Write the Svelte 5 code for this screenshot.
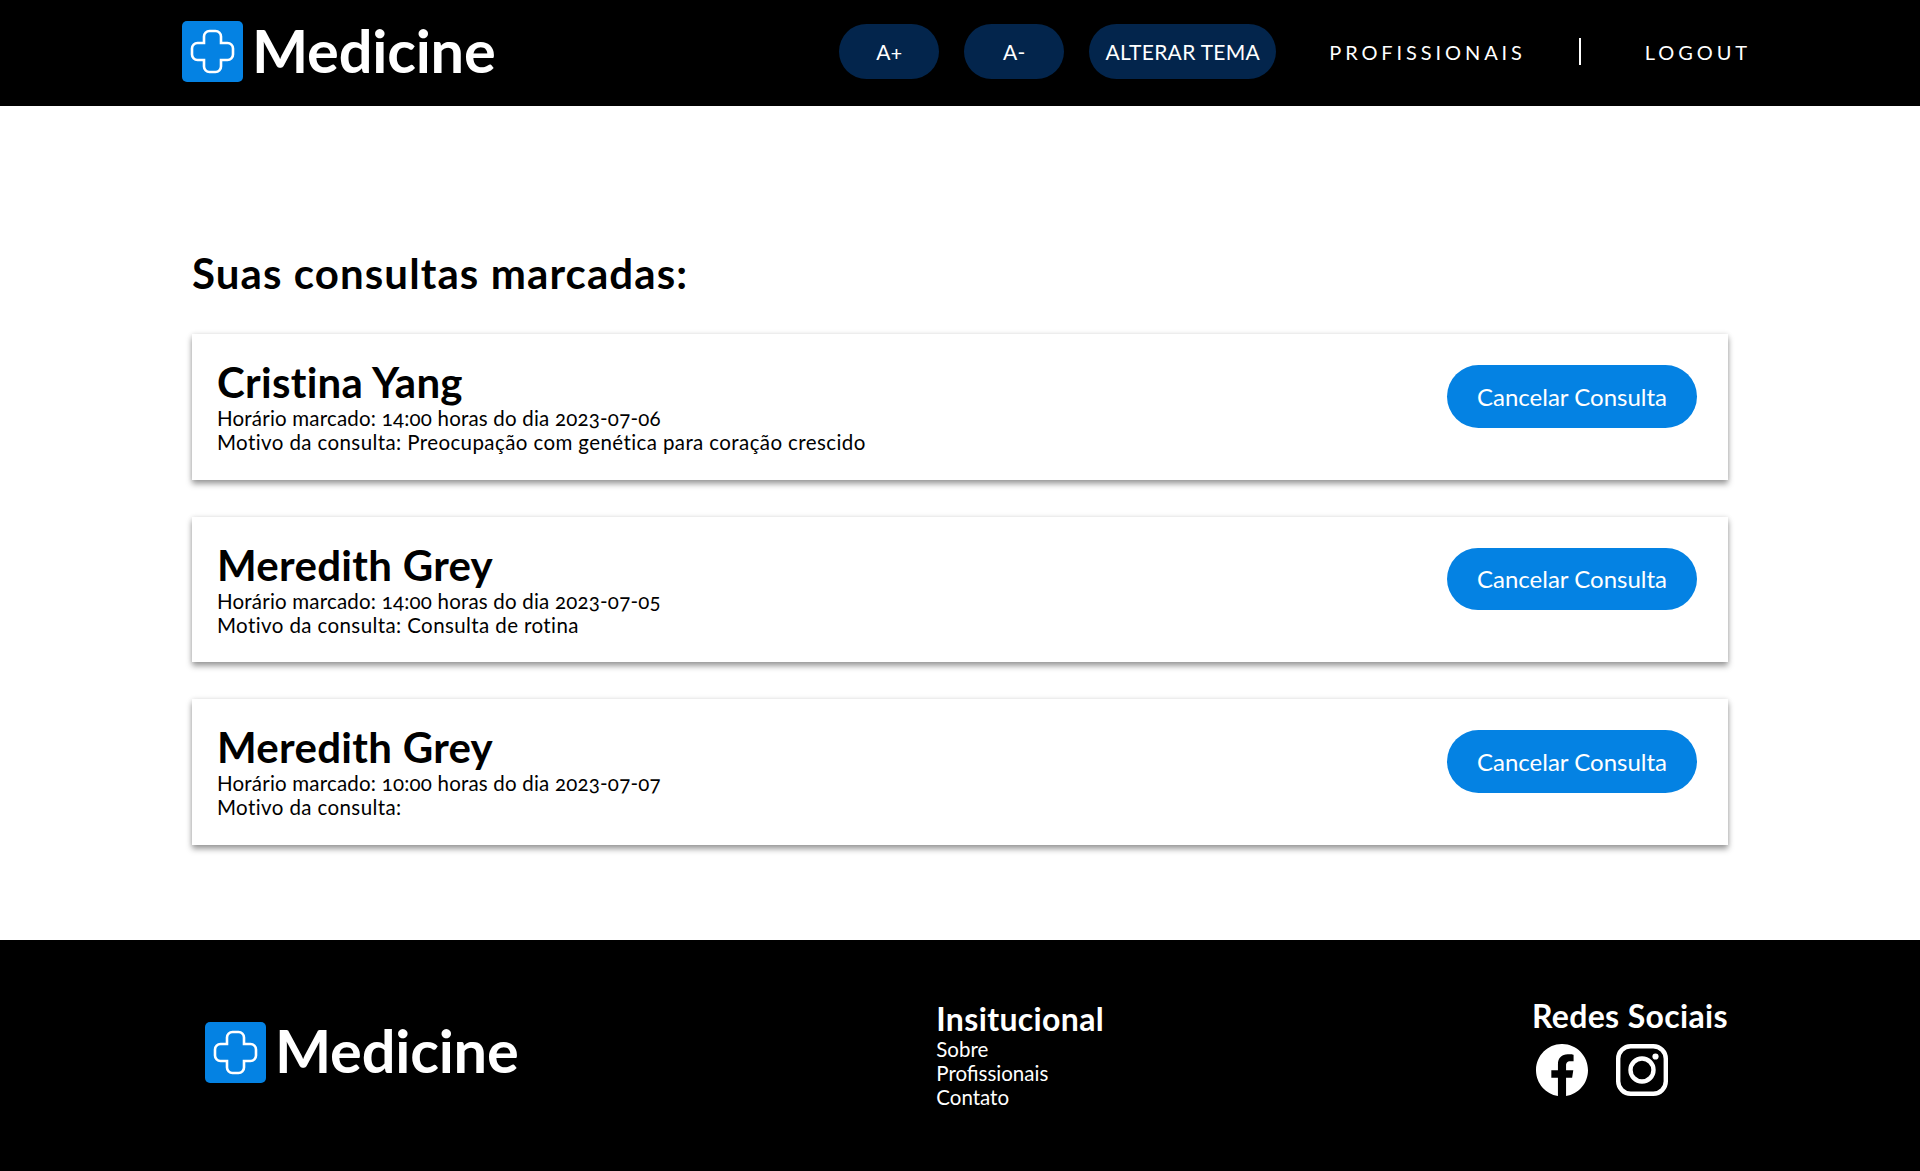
<script>
  const consultas = [
    { nome: 'Cristina Yang', horario: '14:00', dia: '2023-07-06', motivo: 'Preocupação com genética para coração crescido' },
    { nome: 'Meredith Grey', horario: '14:00', dia: '2023-07-05', motivo: 'Consulta de rotina' },
    { nome: 'Meredith Grey', horario: '10:00', dia: '2023-07-07', motivo: '' }
  ];
  const cross = 'M22 15.5a5.5 5.5 0 0 1 5.5-5.5h6a5.5 5.5 0 0 1 5.5 5.5v6.5h6.500a5.500 5.500 0 0 1 5.500 5.500v6a5.500 5.500 0 0 1-5.500 5.500H39v6.500a5.500 5.500 0 0 1-5.500 5.500h-6a5.500 5.500 0 0 1-5.500-5.500V39h-6.500a5.500 5.500 0 0 1-5.500-5.500v-6a5.500 5.500 0 0 1 5.500-5.500H22z';
</script>

{#snippet logo()}
  <div class="logo">
    <svg class="mark" viewBox="0 0 61 61" aria-hidden="true">
      <rect width="61" height="61" rx="5" fill="#0482e3" />
      <path d={cross} fill="none" stroke="#fff" stroke-width="2.6" />
    </svg>
    <span class="word">Medicine</span>
  </div>
{/snippet}

<div class="page">
  <header class="top">
    {@render logo()}
    <nav class="nav">
      <button class="pill small">A+</button>
      <button class="pill small">A-</button>
      <button class="pill theme">ALTERAR TEMA</button>
      <span class="link prof">PROFISSIONAIS</span>
      <span class="divider"></span>
      <span class="link">LOGOUT</span>
    </nav>
  </header>

  <main class="content">
    <h2>Suas consultas marcadas:</h2>
    <div class="list">
      {#each consultas as c}
        <article class="card">
          <div class="info">
            <h3>{c.nome}</h3>
            <p class="when">Horário marcado: {c.horario} horas do dia {c.dia}</p>
            <p class="why">Motivo da consulta: {c.motivo}</p>
          </div>
          <button class="cancel">Cancelar Consulta</button>
        </article>
      {/each}
    </div>
  </main>

  <footer class="bottom">
    {@render logo()}
    <div class="inst">
      <h4>Insitucional</h4>
      <span>Sobre</span>
      <span>Profissionais</span>
      <span>Contato</span>
    </div>
    <div class="social">
      <h4>Redes Sociais</h4>
      <div class="icons">
        <svg class="si" viewBox="0 0 16 16" fill="#fff" aria-hidden="true">
          <path d="M16 8.049c0-4.446-3.582-8.05-8-8.05C3.58 0-.002 3.603-.002 8.05c0 4.017 2.926 7.347 6.75 7.951v-5.625h-2.03V8.05H6.75V6.275c0-2.017 1.195-3.131 3.022-3.131.876 0 1.791.157 1.791.157v1.98h-1.009c-.993 0-1.303.621-1.303 1.258v1.51h2.218l-.354 2.326H9.25V16c3.824-.604 6.75-3.934 6.75-7.951" />
        </svg>
        <svg class="si" viewBox="0 0 52 52" fill="none" stroke="#fff" aria-hidden="true">
          <rect x="2.200" y="2.200" width="47.600" height="47.600" rx="12.500" stroke-width="4.400" />
          <circle cx="26" cy="26" r="11.500" stroke-width="4.400" />
          <circle cx="39.500" cy="12.500" r="3.100" fill="#fff" stroke="none" />
        </svg>
      </div>
    </div>
  </footer>
</div>

<style>
  :global(body) {
    margin: 0;
    background: #fff;
  }
  .page {
    font-family: Lato, "Open Sans", sans-serif;
    color: #000;
    min-height: 1171px;
    display: flex;
    flex-direction: column;
    font-variant-numeric: oldstyle-nums;
  }
  .top {
    height: 106px;
    box-sizing: border-box;
    background: #000;
    display: flex;
    align-items: center;
    padding: 0 169px 3px 182px;
    justify-content: space-between;
  }
  .logo {
    display: flex;
    align-items: center;
    gap: 9px;
  }
  .mark {
    width: 61px;
    height: 61px;
    display: block;
    flex: none;
  }
  .word {
    color: #fff;
    font-size: 59.500px;
    font-weight: 700;
    line-height: 62px;
    letter-spacing: -0.2px;
    margin-bottom: 3px;
  }
  .bottom .word {
    margin-bottom: 5px;
  }
  .nav {
    display: flex;
    align-items: center;
    color: #fff;
  }
  .pill {
    height: 55px;
    border: none;
    border-radius: 28px;
    background: #03254c;
    color: #fff;
    font: inherit;
    font-size: 21px;
    letter-spacing: 0.3px;
    padding: 0;
    margin-right: 25px;
  }
  .small {
    width: 100px;
  }
  .theme {
    width: 187px;
    margin-right: 53px;
    white-space: nowrap;
  }
  .link {
    font-size: 20px;
    letter-spacing: 3.900px;
  }
  .divider {
    width: 2px;
    height: 27px;
    background: #fff;
    margin: 0 64px 0 53px;
  }
  .content {
    flex: 1;
    padding: 0 192px;
  }
  h2 {
    margin: 143px 0 0;
    font-size: 42px;
    line-height: 48px;
    font-weight: 700;
    letter-spacing: 1.100px;
  }
  .list {
    margin-top: 37px;
    display: flex;
    flex-direction: column;
    gap: 37px;
  }
  .card {
    height: 145.500px;
    box-sizing: border-box;
    padding: 25px 31px 0 25px;
    display: flex;
    justify-content: space-between;
    align-items: flex-start;
    box-shadow: 0 4px 6px rgba(0, 0, 0, 0.38), 0 0 5px rgba(0, 0, 0, 0.1);
    background: #fff;
  }
  h3 {
    margin: 0;
    font-size: 42px;
    line-height: 47px;
    font-weight: 700;
    letter-spacing: 0.300px;
  }
  .info p {
    margin: 0;
    font-size: 20.500px;
    line-height: 24px;
  }
  .when {
    letter-spacing: 0.200px;
  }
  .why {
    letter-spacing: 0.400px;
  }
  .cancel {
    width: 250px;
    height: 62.500px;
    margin-top: 6px;
    border: none;
    border-radius: 32px;
    background: #0482e3;
    color: #fff;
    font: inherit;
    font-size: 24px;
  }
  .bottom {
    height: 231px;
    background: #000;
    color: #fff;
    display: flex;
    padding: 0 192px 0 205px;
    justify-content: space-between;
    align-items: center;
  }
  .bottom .logo {
    margin-bottom: 6px;
  }
  .inst {
    display: flex;
    flex-direction: column;
    font-size: 20.500px;
    line-height: 24px;
    margin-right: 10px;
    margin-top: 8px;
    margin-bottom: 9px;
  }
  h4 {
    margin: 0;
    font-size: 32px;
    line-height: 36px;
    font-weight: 700;
    letter-spacing: 0.350px;
  }
  .social {
    margin-bottom: 18px;
  }
  .icons {
    display: flex;
    gap: 28px;
    margin: 10px 0 0 4px;
  }
  .si {
    width: 52px;
    height: 52px;
    display: block;
  }
</style>
